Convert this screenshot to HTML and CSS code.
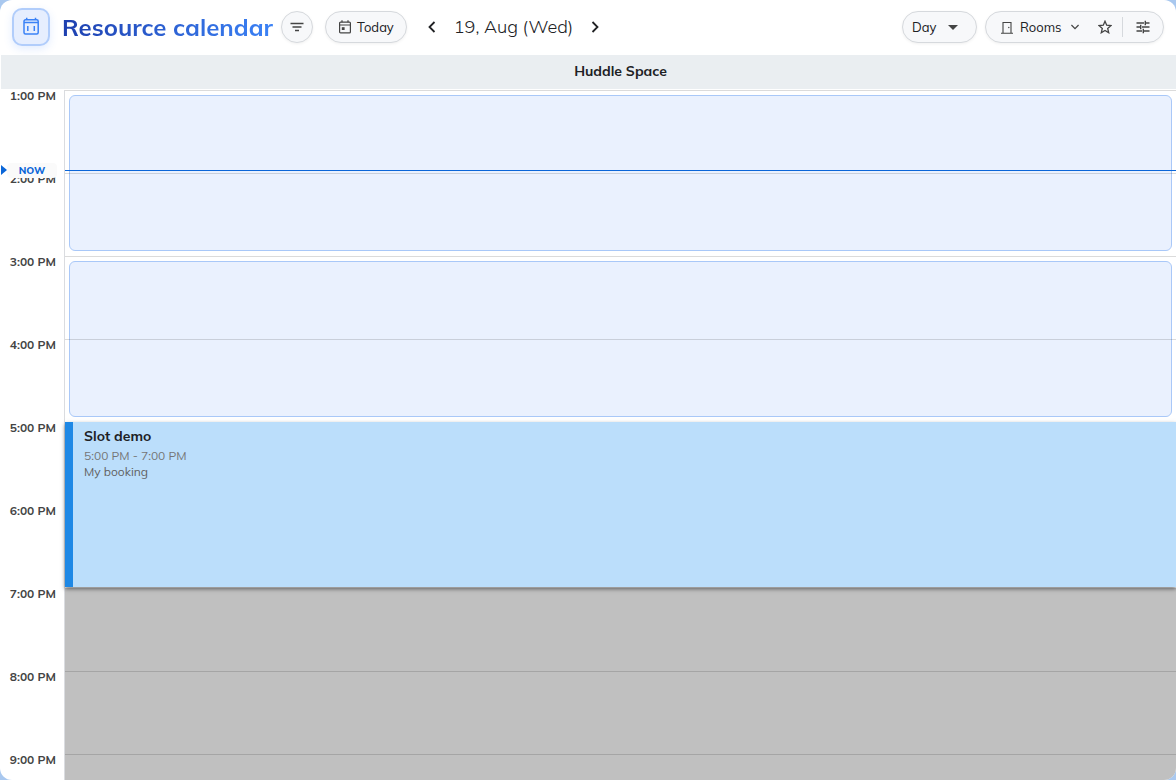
FILE: index.html
```
<!doctype html>
<html lang="en">
<head>
	<meta charset="UTF-8">
	<meta name="viewport" content="width=device-width, initial-scale=1">
	<title>Resource calendar</title>
	<link rel="stylesheet" href="styles.css">
</head>
<body>
	<div class="app">
		<header class="toolbar">
			<span class="logo">
				<svg width="20" height="20" viewBox="0 0 20 20" fill="none" stroke="currentColor" stroke-width="1.5">
					<rect x="3" y="2.8" width="14.2" height="14.2" rx="1.5"/>
					<path d="M3 5.500h14M5.700.8v2M14.500.8v2M6.800 9v5M13.300 9v5"/>
				</svg>
			</span>
			<h1 class="title">Resource calendar</h1>
			<button class="pill filter" aria-label="Filter">
				<svg width="14" height="10" viewBox="0 0 14 10" stroke="currentColor" stroke-width="1.4"><path d="M.5 1.500h13M2.500 5h9M5 8.500h4"/></svg>
			</button>
			<button class="pill today">
				<svg width="14" height="14" viewBox="0 0 14 14" fill="none" stroke="currentColor" stroke-width="1.2">
					<rect x="1.6" y="2.1" width="10.8" height="10.8" rx="1"/>
					<path d="M1.600 5h10.800M4 .3v2M10 .3v2"/>
					<rect x="3.8" y="7.2" width="2.8" height="2.8" fill="currentColor" stroke="none"/>
				</svg>
				Today
			</button>
			<nav class="dates">
				<button class="arrow" aria-label="Previous day">
					<svg width="8" height="12" viewBox="0 0 8 12" fill="none" stroke="currentColor" stroke-width="1.8"><path d="M6.500 1l-5 5 5 5"/></svg>
				</button>
				<span class="date">19, Aug (Wed)</span>
				<button class="arrow" aria-label="Next day">
					<svg width="8" height="12" viewBox="0 0 8 12" fill="none" stroke="currentColor" stroke-width="1.8"><path d="M1.500 1l5 5-5 5"/></svg>
				</button>
			</nav>
			<label class="pill view">
				<select class="view-select" aria-label="View">
					<option>Day</option>
					<option>Week</option>
				</select>
				<svg width="10" height="5" viewBox="0 0 10 5" fill="currentColor"><path d="M0 0h10L5 5z"/></svg>
			</label>
			<div class="pill tools">
				<label class="rooms">
					<svg width="12" height="13" viewBox="0 0 12 13" fill="none" stroke="currentColor" stroke-width="1.1">
						<path d="M2 12V1.500h8V12M0 12.200h12"/>
						<circle cx="7.8" cy="6.5" r=".7" fill="currentColor" stroke="none"/>
					</svg>
					<select class="rooms-select" aria-label="Resource type">
						<option>Rooms</option>
						<option>Desks</option>
					</select>
					<svg width="8" height="6" viewBox="0 0 8 6" fill="none" stroke="currentColor" stroke-width="1.3"><path d="M.4 1L4 4.600 7.600 1"/></svg>
				</label>
				<button class="tool star" aria-label="Favourites">
					<svg width="14" height="14" viewBox="0 0 14 14" fill="none" stroke="currentColor" stroke-width="1.3"><path d="M7 1.200l1.700 4 4.300.4-3.300 2.800 1 4.300L7 10.400l-3.700 2.300 1-4.300L1 5.600l4.300-.4z"/></svg>
				</button>
				<button class="tool settings" aria-label="Settings">
					<svg width="14" height="14" viewBox="0 0 14 14" stroke="currentColor" stroke-width="1.4"><path d="M.5 3h7.500M10 3h3.500M9.300.7v4.600M.5 7H4M6 7h7.500M4.700 4.700v4.600M.5 11H6M8 11h5.500M7.300 8.700v4.600"/></svg>
				</button>
			</div>
		</header>

		<div class="room-head">
			<span class="room-name">Huddle Space</span>
		</div>

		<main class="schedule">
			<div class="hours">
				<div class="hour">1:00 PM</div>
				<div class="hour">2:00 PM</div>
				<div class="hour">3:00 PM</div>
				<div class="hour">4:00 PM</div>
				<div class="hour">5:00 PM</div>
				<div class="hour">6:00 PM</div>
				<div class="hour">7:00 PM</div>
				<div class="hour">8:00 PM</div>
				<div class="hour">9:00 PM</div>
			</div>
			<div class="room">
				<div class="slot slot-1pm"></div>
				<div class="slot slot-3pm"></div>
				<div class="closed"></div>
				<div class="line row-1"></div>
				<div class="line row-2"></div>
				<div class="line row-3"></div>
				<div class="line row-4"></div>
				<div class="line row-8"></div>
				<div class="line row-9"></div>
				<article class="event">
					<h2 class="event-name">Slot demo</h2>
					<p class="event-time">5:00 PM - 7:00 PM</p>
					<p class="event-owner">My booking</p>
				</article>
			</div>
			<div class="now">
				<span class="now-label">NOW</span>
				<span class="now-line"></span>
			</div>
		</main>
	</div>
</body>
</html>
```
FILE: styles.css
```
*{box-sizing: border-box; margin: 0; padding: 0;}
body{
	background: #a9c8ef; color: #202124;
	font-family: Mulish, Lato, "Noto Sans", sans-serif;
	font-size: 13px;
}
button, select{font: inherit; color: inherit; background: none; border: 0;}
svg{display: block; flex: none;}
.app{
	display: flex; flex-direction: column;
	height: 100vh; overflow: hidden;
	background: #fff; border-radius: 12px;
}

/* toolbar */
.toolbar{
	display: flex; align-items: center; flex: none;
	height: 55px; padding: 0 12px 1px;
}
.logo{
	display: grid; place-items: center;
	width: 38px; height: 38px;
	border: 2px solid #b1cdfb; border-radius: 10px;
	background: #e6eefe; color: #3b82f6;
	box-shadow: 0 3px 8px rgba(59,130,246,.15);
}
.title{
	margin-left: 12px;
	font-size: 24px; line-height: 36px; font-weight: 700; white-space: nowrap;
	background: linear-gradient(90deg, #1e40af, #3b82f6);
	-webkit-background-clip: text; background-clip: text;
	color: transparent;
}
.pill{
	display: flex; align-items: center; flex: none;
	height: 32px; border: 1px solid #d6d9dd; border-radius: 16px;
	background: #f7f8fa;
	box-shadow: 0 1px 3px rgba(0,0,0,.06);
}
.pill svg{color: #444;}
.filter{width: 32px; margin-left: 8px; justify-content: center;}
.today{margin-left: 12px; padding: 0 12px; gap: 5px;}
.dates{display: flex; align-items: center; margin: 0 auto 0 13px; gap: 10px;}
.arrow{display: grid; place-items: center; width: 24px; height: 32px;}
.date{font-size: 18px; line-height: 28px; font-weight: 300; white-space: nowrap;}
.view{width: 75px; padding: 0 18px 0 9px; justify-content: space-between;}
select{appearance: none; outline: 0;}
.view-select{width: 32px;}
.tools{margin-left: 8px;}
.rooms{display: flex; align-items: center; padding-left: 15px;}
.rooms-select{width: 44px; margin: 0 7px;}
.tool{display: grid; place-items: center; height: 20px;}
.star{width: 44px; padding-left: 8px; border-right: 1px solid #d6d9dd;}
.settings{width: 40px;}

.room-head{
	flex: none; height: 34px; margin: 0 0 1px 1px; padding-left: 64px;
	background: #eaeef1; text-align: center;
}
.room-name{font-size: 14px; line-height: 32px; font-weight: 700;}

/* one row is one hour */
.schedule{
	display: flex; position: relative;
	flex: 1; min-height: 0;
}
.hours{width: 65px; flex: none; border-right: 1px solid #dadce0;}
.hour{
	height: 83px; padding-right: 8px;
	font-size: 12px; line-height: 12px; font-weight: 700;
	text-align: right; color: #444;
}
.room{display: grid; flex: 1; grid-template-rows: repeat(9, 83px);}
.room > *{grid-column: 1;}
.slot{
	margin: 5px 4px;
	border: 1px solid #a9c8f8; border-radius: 6px;
	background: #eaf1fe;
}
.slot-1pm{grid-row: 1 / 3;}
.slot-3pm{grid-row: 3 / 5;}
.closed{grid-row: 7 / 10; background: #c0c0c0;}
.line{height: 1px; background: rgba(0,0,0,.14);}
.row-1{grid-row: 1;}
.row-2{grid-row: 2;}
.row-3{grid-row: 3;}
.row-4{grid-row: 4;}
.row-8{grid-row: 8;}
.row-9{grid-row: 9;}
.event{
	grid-row: 5 / 7;
	margin-bottom: 1px; padding: 5px 11px;
	border-left: 8px solid #1e88e5;
	background: #bbdefb;
	box-shadow: 0 2px 4px rgba(0,0,0,.5);
}
.event-name{font-size: 14px; line-height: 18px; font-weight: 700;}
.event-time, .event-owner{font-size: 12px; line-height: 16px; color: #757575;}
.event-time{margin-top: 3px;}
.event-owner{color: #616161;}

/* current time, drawn over the rows */
.now{
	position: absolute; left: 0; right: 0; top: 73px;
	display: flex; align-items: center; height: 15px;
}
.now::before{
	content: ""; margin: 0 0 1px 1px;
	border: 5px solid transparent; border-left: 6px solid #0b66d8; border-right: 0;
}
.now-label{
	width: 50px; margin-right: 8px;
	border-radius: 4px; background: #fafafa;
	font-size: 10px; line-height: 15px; font-weight: 800;
	text-align: center; color: #0b66d8;
}
.now-line{flex: 1; height: 1px; background: #0b66d8;}
```
